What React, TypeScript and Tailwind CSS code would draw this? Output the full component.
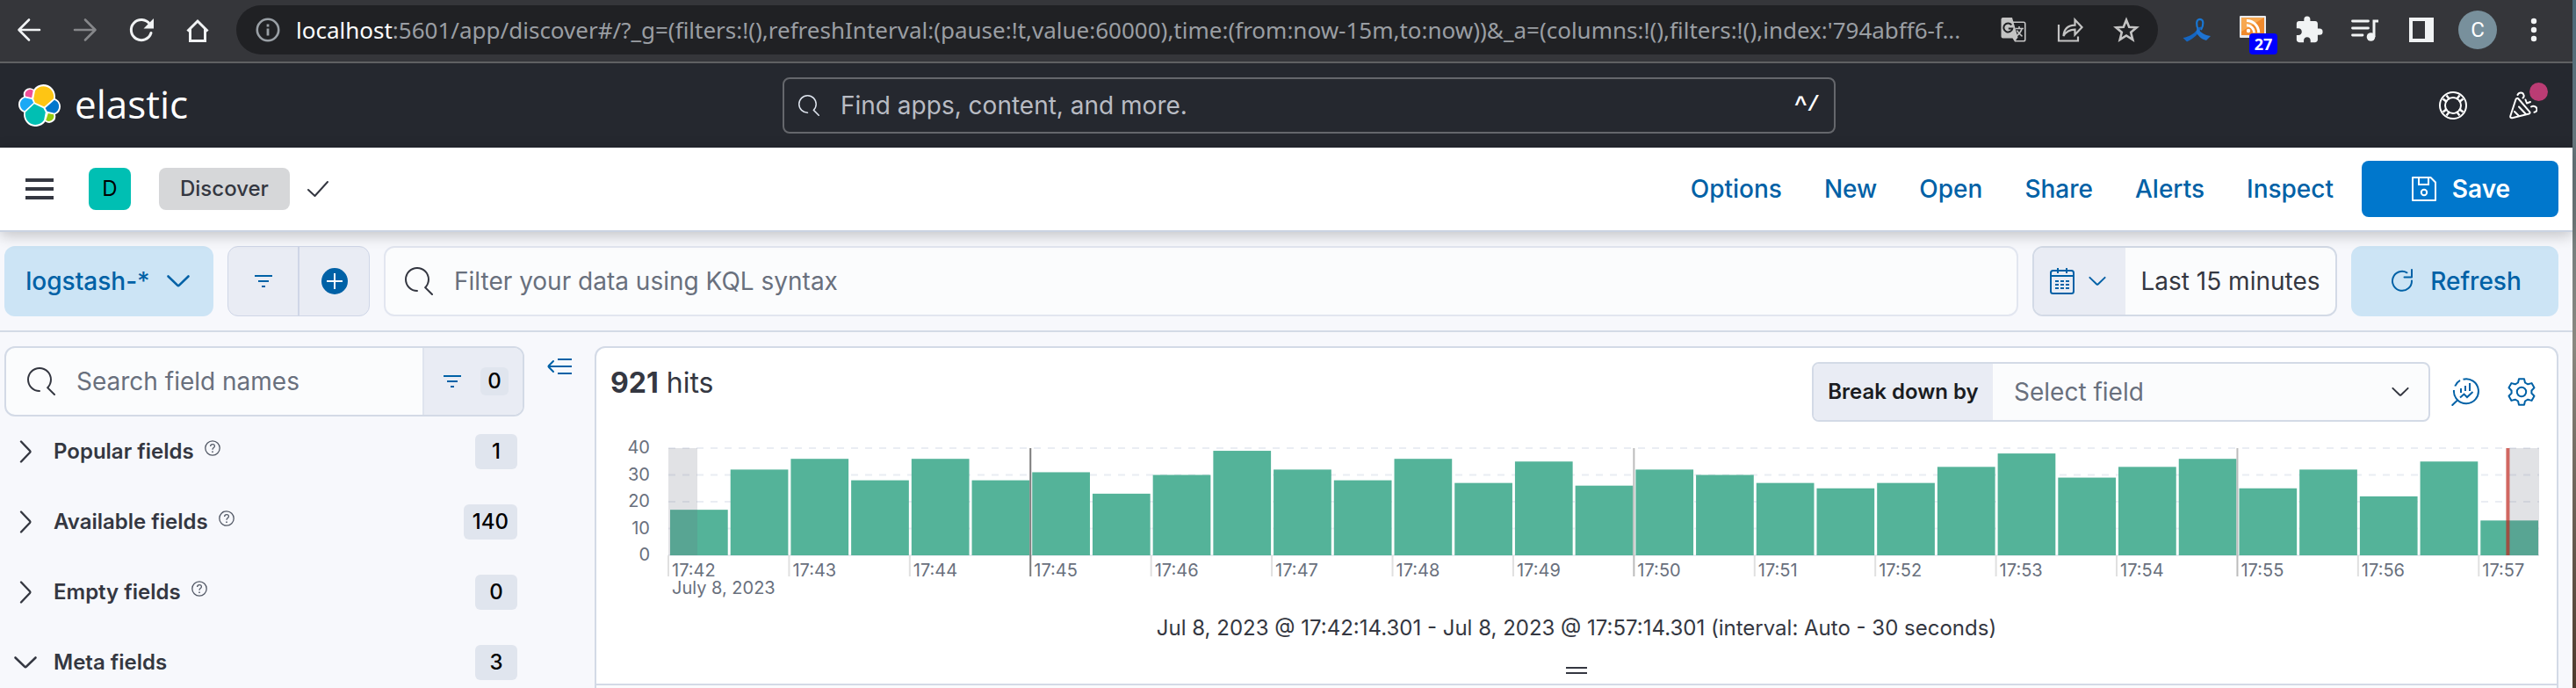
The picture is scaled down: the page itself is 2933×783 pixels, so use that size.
import React from "react";

type IconProps = { className?: string };

const bars = [
  17, 32, 36, 28, 36, 28, 31, 23, 30, 39, 32, 28, 36, 27, 35, 26, 32, 30, 27, 25, 27, 33, 38, 29, 33, 36, 25, 32, 22,
  35, 13,
];
const PLOT_HEIGHT = 122;
const Y_MAX = 40;

const minuteTicks = Array.from({ length: 16 }, (_, i) => ({ label: `17:${42 + i}`, slot: i * 2 }));

const fieldGroups = [
  { name: "Popular fields", count: 1, help: true, open: false },
  { name: "Available fields", count: 140, help: true, open: false },
  { name: "Empty fields", count: 0, help: true, open: false },
  { name: "Meta fields", count: 3, help: false, open: true },
];

const menuLinks = ["Options", "New", "Open", "Share", "Alerts", "Inspect"];

function SearchIcon({ className }: IconProps) {
  return (
    <svg viewBox="0 0 16 16" className={className} fill="currentColor" aria-hidden="true">
      <path d="M11.271 11.978l3.872 3.873a.502.502 0 00.708 0 .502.502 0 000-.708l-3.565-3.564c2.38-2.747 2.267-6.923-.342-9.532-2.73-2.73-7.17-2.73-9.898 0-2.728 2.729-2.728 7.17 0 9.9a6.955 6.955 0 004.949 2.05.5.5 0 000-1 5.96 5.96 0 01-4.242-1.757 6.01 6.01 0 010-8.486 6.004 6.004 0 018.484 0 6.01 6.01 0 010 8.486.5.5 0 000 .738z" />
    </svg>
  );
}

function ChevronDown({ className }: IconProps) {
  return (
    <svg viewBox="0 0 32 32" className={className} fill="none" stroke="currentColor" aria-hidden="true">
      <path d="M4.5 10.5 15 20.600q1 .9 2 0L27.5 10.5" strokeWidth="2.6" strokeLinecap="round" strokeLinejoin="round" />
    </svg>
  );
}

function ChevronRight({ className }: IconProps) {
  return (
    <svg viewBox="0 0 32 32" className={className} fill="none" stroke="currentColor" aria-hidden="true">
      <path d="M11 4.5 21 15q.9 1 0 2L11 27.5" strokeWidth="2.4" strokeLinecap="round" strokeLinejoin="round" />
    </svg>
  );
}

function FilterIcon({ className }: IconProps) {
  return (
    <svg viewBox="0 0 32 32" className={className} fill="none" stroke="currentColor" strokeWidth="2" aria-hidden="true">
      <path d="M6 10h20M10 16h12M14 22h4" />
    </svg>
  );
}

function ElasticMark({ className }: IconProps) {
  return (
    <svg viewBox="0 0 32 32" className={className} aria-hidden="true">
      <path
        fill="#fff"
        d="M32 16.77c0-2.68-1.66-5.02-4.157-5.946A9.25 9.25 0 0 0 28 9.11C28 4.089 23.93 0 18.93 0c-2.925 0-5.643 1.4-7.344 3.78A4.787 4.787 0 0 0 8.64 2.776 4.83 4.83 0 0 0 3.8 7.614c0 .58.1 1.14.3 1.66A6.381 6.381 0 0 0 0 15.26c0 2.7 1.68 5.06 4.18 5.97-.11.56-.16 1.14-.16 1.73 0 5.01 4.07 9.07 9.07 9.07 2.93 0 5.65-1.41 7.34-3.8.84.66 1.87 1.02 2.94 1.02a4.83 4.83 0 0 0 4.84-4.84c0-.58-.1-1.14-.3-1.66A6.383 6.383 0 0 0 32 16.77"
      />
      <path fill="#FEC514" d="M12.58 13.787l7.002 3.211 7.066-6.213a7.849 7.849 0 0 0 .152-1.557c0-4.287-3.477-7.774-7.752-7.774a7.74 7.74 0 0 0-6.395 3.381l-1.176 6.118 1.103 2.834z" />
      <path fill="#00BFB3" d="M5.333 21.228a7.964 7.964 0 0 0-.153 1.586c0 4.299 3.487 7.796 7.773 7.796a7.774 7.774 0 0 0 6.415-3.397l1.166-6.1-1.557-2.987-7.03-3.212-6.614 6.314z" />
      <path fill="#F04E98" d="M5.288 9.067l4.8 1.137L11.14 4.728A3.785 3.785 0 0 0 5.06 7.713c0 .476.078.936.229 1.354z" />
      <path fill="#1BA9F5" d="M4.872 10.214c-2.14.71-3.592 2.762-3.592 5.02a5.274 5.274 0 0 0 3.408 4.931l6.735-6.114-1.237-2.651-5.314-1.186z" />
      <path fill="#93C90E" d="M20.873 27.192c.669.514 1.48.795 2.31.795a3.785 3.785 0 0 0 3.559-5.084l-4.2-.986-1.669 5.275z" />
      <path fill="#07C" d="M21.848 20.563l5.28 1.238c2.148-.711 3.6-2.763 3.6-5.022a5.282 5.282 0 0 0-3.419-4.923l-6.908 6.073 1.447 2.634z" />
    </svg>
  );
}

function ChromeButton({ label, children }: { label: string; children: React.ReactNode }) {
  return (
    <button type="button" aria-label={label} className="relative flex h-14 w-16 shrink-0 items-center justify-center">
      {children}
    </button>
  );
}

function BrowserBar() {
  return (
    <div className="flex h-[72px] shrink-0 items-center border-b-2 border-[#5f6063] bg-[#35363a] pb-0.5 pl-px pr-3 text-[#f1f3f4]">
      <ChromeButton label="Back">
        <svg viewBox="0 0 32 32" className="size-8" fill="none" stroke="#f1f3f4" strokeWidth="2.6">
          <path d="M28 16H5M16 4.500 4.500 16 16 27.500" strokeLinejoin="round" strokeLinecap="round" />
        </svg>
      </ChromeButton>
      <ChromeButton label="Forward">
        <svg viewBox="0 0 32 32" className="size-8" fill="none" stroke="#86878a" strokeWidth="2.6">
          <path d="M4 16h23M16 4.500 27.500 16 16 27.500" strokeLinejoin="round" strokeLinecap="round" />
        </svg>
      </ChromeButton>
      <ChromeButton label="Reload">
        <svg viewBox="0 0 32 32" className="size-8" fill="none" stroke="#f1f3f4" strokeWidth="3">
          <path d="M27 19.5A11.6 11.6 0 1 1 25.5 9.5" strokeLinecap="round" />
          <path d="M30 3v11.5H18.5z" fill="#f1f3f4" stroke="none" />
        </svg>
      </ChromeButton>
      <ChromeButton label="Home">
        <svg viewBox="0 0 32 32" className="size-8" fill="none" stroke="#f1f3f4" strokeWidth="3">
          <path d="M4.5 17.5 16 6l11.500 11.5" />
          <path d="M7.5 15v13.500h17V15" />
        </svg>
      </ChromeButton>
      <div className="ml-3 flex h-14 min-w-0 flex-1 items-center rounded-full bg-[#202124] pl-[22px] pr-1">
        <svg viewBox="0 0 28 28" className="size-7 shrink-0" fill="none" stroke="#9aa0a6" strokeWidth="2.6">
          <circle cx="14" cy="14" r="12.2" />
          <path d="M14 12.5v8M14 7.500v3" strokeWidth="2.8" />
        </svg>
        <div className="ml-[18px] min-w-0 flex-1 truncate font-['Noto_Sans','Open_Sans',sans-serif] text-[26px] text-[#9a9ea3]">
          <span className="text-white">localhost</span>
          :5601/app/discover#/?_g=(filters:!(),refreshInterval:(pause:!t,value:60000),time:(from:now-15m,to:now))&amp;_a=(columns:!(),filters:!(),index:'794abff6-f...
        </div>
        <ChromeButton label="Translate this page">
          <svg viewBox="0 0 30 30" className="size-[30px]" fill="none">
            <path d="M12 6.2h14a1.8 1.8 0 0 1 1.8 1.8v18a1.8 1.8 0 0 1-1.8 1.8H16" stroke="#c4c4c4" strokeWidth="1.6" />
            <path d="M2.5 1h10.500l6.500 22.500-3.500 5-2.500-4h-11a2 2 0 0 1-2-2V3a2 2 0 0 1 2-2z" fill="#c4c4c4" />
            <path d="M12.3 9.4a5 5 0 1 0 1 4.100H8.800" stroke="#202124" strokeWidth="2" />
            <path d="M16.5 13.5h9.500M21 11v2.500M24 13.5c-.8 4-3.500 6.500-6 8.300M18.5 15.5c1 2.500 3.500 5 6 6.800" stroke="#c4c4c4" strokeWidth="1.6" />
          </svg>
        </ChromeButton>
        <ChromeButton label="Share this page">
          <svg viewBox="0 0 32 32" className="size-8" fill="none" stroke="#c4c4c4" strokeWidth="2.2">
            <path d="M3 10v18.500h22v-5" />
            <path d="M8.5 23c.5-8 5-12 13-12.300V4.500l8 8.500-8 8.500v-5.800c-6 0-10 2-13 7.300z" />
          </svg>
        </ChromeButton>
        <ChromeButton label="Bookmark this page">
          <svg viewBox="0 0 32 32" className="size-8" fill="none" stroke="#c4c4c4" strokeWidth="2.6">
            <path d="M16 4.8l3.200 7.900 8.500.6-6.500 5.500 2.100 8.300-7.300-4.600-7.300 4.600 2.100-8.300-6.500-5.500 8.500-.6z" />
          </svg>
        </ChromeButton>
      </div>
      <div className="ml-3 flex items-center">
        <ChromeButton label="Ribbon extension">
          <svg viewBox="0 0 32 32" className="size-8" fill="none">
            <path d="M18 16C15.500 11 15 4 19.800 3.800 24.600 4 24 11 21 16" stroke="#1976d2" strokeWidth="2.2" />
            <path d="M21.500 12.500C20 19 13 26 5 29.500L.5 25C8 24 15 19.500 18.500 13z" fill="#1565c0" />
            <path d="M17 13c2.500 5.500 7 8.800 15 10l-5 5c-6-1.500-9.500-5.500-11.500-9.500z" fill="#1e73d2" />
          </svg>
        </ChromeButton>
        <ChromeButton label="Feed reader extension">
          <svg viewBox="0 0 32 32" className="mb-1 size-8" fill="none">
            <rect x="1" y="2" width="30" height="25" rx="1" fill="#e9eaec" />
            <rect x="3" y="4" width="26" height="20" fill="#f08a2c" />
            <path d="M3 4h26L3 20z" fill="#f7a851" />
            <circle cx="11" cy="19" r="2.2" fill="#fff" />
            <path d="M9 12.8a8.5 8.5 0 0 1 8.500 8.500M9 7.5a13.500 13.500 0 0 1 13.700 13.700" stroke="#fff" strokeWidth="3" />
          </svg>
          <span className="absolute bottom-0 right-1 flex h-6 w-8 items-center justify-center rounded-[4px] bg-[#0000ff] font-['Open_Sans',sans-serif] text-[18px] font-bold leading-6 text-white">
            27
          </span>
        </ChromeButton>
        <ChromeButton label="Extensions">
          <svg viewBox="0 0 24 24" className="size-[34px]" fill="#f1f3f4">
            <path d="M20.5 11H19V7c0-1.1-.9-2-2-2h-4V3.5a2.5 2.5 0 0 0-5 0V5H4c-1.1 0-1.99.9-1.99 2v3.8H3.5c1.49 0 2.7 1.21 2.7 2.7s-1.21 2.7-2.7 2.7H2V20c0 1.1.9 2 2 2h3.8v-1.5c0-1.49 1.21-2.7 2.7-2.7s2.7 1.21 2.7 2.7V22H17c1.1 0 2-.9 2-2v-4h1.5a2.5 2.5 0 0 0 0-5z" />
          </svg>
        </ChromeButton>
        <ChromeButton label="Media controls">
          <svg viewBox="0 0 32 32" className="size-8" fill="none" stroke="#f1f3f4" strokeWidth="2.8" strokeLinecap="round">
            <path d="M1.5 6h18M1.5 14h18M1.5 22H13" />
            <path d="M26 24V6h5" strokeLinecap="butt" strokeWidth="3" />
            <circle cx="22.5" cy="24" r="4.8" fill="#f1f3f4" stroke="none" />
          </svg>
        </ChromeButton>
        <ChromeButton label="Side panel">
          <svg viewBox="0 0 28 28" className="size-7">
            <path fill="#f1f3f4" fillRule="evenodd" d="M0 0h28v28H0zM4 4v20h14V4z" />
          </svg>
        </ChromeButton>
        <ChromeButton label="Profile">
          <span className="flex size-11 items-center justify-center rounded-full bg-[#78909c] font-[Roboto,sans-serif] text-[24px] leading-none text-white">
            C
          </span>
        </ChromeButton>
        <ChromeButton label="Browser menu">
          <svg viewBox="0 0 8 28" className="h-7 w-2" fill="#f1f3f4">
            <circle cx="4" cy="4" r="3.2" />
            <circle cx="4" cy="14" r="3.2" />
            <circle cx="4" cy="24" r="3.2" />
          </svg>
        </ChromeButton>
      </div>
    </div>
  );
}

function GlobalHeader() {
  return (
    <header className="grid h-24 shrink-0 grid-cols-[891fr_1199fr_839fr] items-center bg-[#25282f] text-white">
      <a href="#home" className="flex items-center pl-[21px]">
        <ElasticMark className="size-12" />
        <span className="ml-4 pb-1 font-['Open_Sans','Noto_Sans',sans-serif] text-[44px] leading-[48px]">elastic</span>
      </a>
      <div className="flex h-16 items-center rounded-lg border-2 border-[#65676c] px-4">
        <SearchIcon className="size-6 shrink-0 text-[#dfe5ef]" />
        <input
          type="search"
          aria-label="Find apps, content, and more."
          placeholder="Find apps, content, and more."
          className="ml-6 min-w-0 flex-1 bg-transparent text-[28px] leading-8 text-white outline-none placeholder:text-[#b9bcc4]"
        />
        <span className="font-['Liberation_Mono',monospace] text-[24px] font-bold leading-8">^/</span>
      </div>
      <div className="flex items-center justify-end gap-12 pr-10">
        <button type="button" aria-label="Help menu">
          <svg viewBox="0 0 32 32" className="size-8" fill="none" stroke="#fff" strokeWidth="2">
            <circle cx="16" cy="16" r="15" />
            <circle cx="16" cy="16" r="9" />
            <path d="M4.5 8.500 9 12M8.5 4.500 12 9M27.5 8.500 23 12M23.5 4.500 20 9M4.5 23.500 9 20M8.5 27.500 12 23M27.5 23.500 23 20M23.5 27.500 20 23" strokeWidth="2.4" />
          </svg>
        </button>
        <button type="button" aria-label="Newsfeed menu" className="relative">
          <svg viewBox="0 0 32 32" className="size-8" fill="none" stroke="#fff" strokeWidth="2" strokeLinecap="round" strokeLinejoin="round">
            <path d="M7.5 9 1.3 28c-.4 1.500.6 2.500 2 2.200L22.500 25.500c1.200-.4 1.400-1.500.6-2.400L10.500 8.500c-1-1-2.500-.8-3 .5z" />
            <path d="M6 23l5 5M11 17.500l8 8.500" />
            <path d="M9.5 4c1.500-3.500 6-3.500 7 0 .6 1.800-.2 2.800-1 3.500M25 17.500c3-2 7 .4 6.500 3.500-.2 1.700-1.300 2.600-3 2.800M18.5 9.500l1.500 4 4-1.500" />
          </svg>
          <span className="absolute -right-3 -top-2.5 size-[21px] rounded-full bg-[#bb3c74]" />
        </button>
      </div>
    </header>
  );
}

function AppMenu() {
  return (
    <nav className="relative z-10 flex h-24 shrink-0 items-center border-b-2 border-[#cad3e2] bg-white pr-4 shadow-[0_4px_16px_rgba(0,0,0,0.22)]">
      <button type="button" aria-label="Toggle primary navigation" className="ml-[29px]">
        <svg viewBox="0 0 32 24" className="h-6 w-8" fill="#343741">
          <path d="M0 0h32v4H0zM0 10h32v4H0zM0 20h32v4H0z" />
        </svg>
      </button>
      <button type="button" aria-label="Default space" className="ml-10 flex size-12 items-center justify-center rounded-lg bg-[#00bfb3] text-[24px] text-black">
        D
      </button>
      <a href="#discover" className="ml-8 flex h-12 items-center rounded-lg bg-[#d6d7d9] px-6 text-[24px] font-medium text-[#343741]">
        Discover
      </a>
      <svg viewBox="0 0 24 24" className="ml-5 size-6" fill="none" stroke="#343741" strokeWidth="2" strokeLinecap="round" strokeLinejoin="round">
        <path d="M1 13l7.500 7L23 4" />
      </svg>
      <div className="ml-auto flex items-center">
        {menuLinks.map((link) => (
          <a key={link} href={`#${link.toLowerCase()}`} className="px-6 text-[28px] font-medium leading-8 text-[#0061a6]">
            {link}
          </a>
        ))}
        <button type="button" className="ml-2 flex h-16 w-56 items-center justify-center gap-4 rounded-lg bg-[#0077cc] text-[28px] font-semibold leading-8 text-white">
          <svg viewBox="0 0 32 32" className="size-8" fill="none" stroke="#fff" strokeWidth="2">
            <path d="M3 3h20.500l5.500 5.500V29H3z" strokeLinejoin="round" />
            <path d="M10 3v8h11V3" />
            <circle cx="16" cy="20" r="3.2" />
          </svg>
          Save
        </button>
      </div>
    </nav>
  );
}

function QueryBar() {
  return (
    <div className="flex shrink-0 gap-4 border-b-2 border-[#d3dae6] pb-4 pl-[5px] pr-4 pt-4">
      <button type="button" className="flex h-20 w-[238px] shrink-0 items-center justify-center gap-4 rounded-xl bg-[#cce4f5] text-[28px] font-medium leading-8 text-[#0061a6]">
        logstash-*
        <ChevronDown className="size-8" />
      </button>
      <div className="flex h-20 w-[162px] shrink-0 divide-x-2 divide-[#cfd6e7] overflow-hidden rounded-xl border border-[#cfd6e7] bg-[#e9ecf4] text-[#0061a6]">
        <button type="button" aria-label="Saved query menu" className="flex flex-1 items-center justify-center">
          <FilterIcon className="size-8" />
        </button>
        <button type="button" aria-label="Add filter" className="flex flex-1 items-center justify-center">
          <svg viewBox="0 0 32 32" className="size-8" aria-hidden="true">
            <circle cx="16" cy="16" r="15" fill="#0061a6" />
            <path d="M16 7v18M7 16h18" stroke="#fff" strokeWidth="2" />
          </svg>
        </button>
      </div>
      <div className="flex h-20 min-w-0 flex-1 items-center rounded-xl border-2 border-[#e2e6f0] bg-[#fbfcfd] pl-[22px]">
        <SearchIcon className="size-8 shrink-0 text-[#343741]" />
        <input
          type="search"
          aria-label="Filter your data using KQL syntax"
          placeholder="Filter your data using KQL syntax"
          className="ml-6 min-w-0 flex-1 bg-transparent text-[28px] leading-8 text-[#343741] outline-none placeholder:text-[#69707d]"
        />
      </div>
      <div className="flex h-20 w-[347px] shrink-0 overflow-hidden rounded-xl border-2 border-[#d3dae6] bg-[#fbfcfd]">
        <button type="button" aria-label="Date quick select" className="flex w-[104px] items-center gap-3 bg-[#e9ecf4] pl-4 text-[#0061a6]">
          <svg viewBox="0 0 32 32" className="size-8" fill="none" stroke="currentColor" strokeWidth="2" aria-hidden="true">
            <rect x="3" y="4" width="26" height="26" rx="2.5" />
            <path d="M3 10h26M11 1v6M21 1v6" />
            <path d="M8 16h16M8 20h16M8 24h16" strokeDasharray="4 2" />
          </svg>
          <ChevronDown className="size-6" />
        </button>
        <button type="button" className="flex-1 text-center text-[28px] leading-8 text-[#343741]">
          Last 15 minutes
        </button>
      </div>
      <button type="button" className="flex h-20 w-[236px] shrink-0 items-center justify-center gap-4 rounded-xl bg-[#cce4f5] text-[28px] font-medium leading-8 text-[#0061a6]">
        <svg viewBox="0 0 32 32" className="size-8" fill="none" stroke="currentColor" strokeWidth="2" strokeLinecap="round" strokeLinejoin="round" aria-hidden="true">
          <path d="M21.5 6.3A11 11 0 1 0 27 15.5" />
          <path d="M27 3v8.500h-8.500" />
        </svg>
        Refresh
      </button>
    </div>
  );
}

function Sidebar() {
  return (
    <aside className="flex w-[677px] shrink-0 pl-[5px] pt-4">
      <div className="w-[592px]">
        <div className="flex h-20 overflow-hidden rounded-xl border-2 border-[#d3dae6] bg-[#fbfcfd]">
          <SearchIcon className="ml-6 size-8 shrink-0 self-center text-[#343741]" />
          <input
            type="search"
            aria-label="Search field names"
            placeholder="Search field names"
            className="ml-6 min-w-0 flex-1 bg-transparent text-[28px] leading-8 text-[#343741] outline-none placeholder:text-[#69707d]"
          />
          <button type="button" aria-label="Filter by type" className="flex w-[114px] items-center gap-4 border-l-2 border-[#dfe4ee] bg-[#e9ecf4] pl-4 text-[#0061a6]">
            <FilterIcon className="size-8" />
            <span className="flex size-8 items-center justify-center rounded-md bg-[#e0e5ee] text-[24px] font-medium text-black">0</span>
          </button>
        </div>
        <ul>
          {fieldGroups.map((group) => (
            <li key={group.name}>
              <button type="button" aria-expanded={group.open} className="flex h-20 w-full items-center px-2 text-left">
                {group.open ? (
                  <ChevronDown className="size-8 text-[#343741]" />
                ) : (
                  <ChevronRight className="size-8 text-[#343741]" />
                )}
                <span className="ml-4 text-[24px] font-semibold leading-8 text-[#343741]">{group.name}</span>
                {group.help && (
                  <svg viewBox="0 0 18 18" className="mb-2 ml-3 size-[18px]" fill="none" stroke="#535966" strokeWidth="1.3" aria-hidden="true">
                    <circle cx="9" cy="9" r="8.2" />
                    <path d="M6.6 7c.1-3.2 4.8-3.1 4.8-.3 0 1.900-2.400 1.900-2.400 4.100" />
                    <path d="M9 12.5v1.600" strokeWidth="1.6" />
                  </svg>
                )}
                <span className="ml-auto flex h-10 min-w-12 items-center justify-center rounded-md bg-[#e0e5ee] px-2.5 text-[24px] font-medium leading-8 text-black">
                  {group.count}
                </span>
              </button>
            </li>
          ))}
        </ul>
      </div>
      <button type="button" aria-label="Hide sidebar" className="ml-6 mt-2 size-8 text-[#0061a6]">
        <svg viewBox="0 0 32 32" className="size-8" fill="none" stroke="currentColor" strokeWidth="2" aria-hidden="true">
          <path d="M14 7h16M3 15h27M14 23h16" />
          <path d="M9 9l-5.200 5.200q-.8.8 0 1.600L9 21" strokeLinecap="round" />
        </svg>
      </button>
    </aside>
  );
}

function Histogram() {
  const slotWidth = 100 / bars.length;
  const yFor = (value: number) => PLOT_HEIGHT - (value / Y_MAX) * PLOT_HEIGHT;
  const tickColor = (label: string) =>
    label === "17:45" ? "#7b7b7b" : label === "17:50" || label === "17:55" ? "#bcbcbc" : "#e0e0e0";

  return (
    <div className="flex pl-[28px] pr-5">
      <svg className="h-[170px] w-[54px] shrink-0 overflow-visible" role="presentation">
        {[40, 30, 20, 10, 0].map((value) => (
          <text key={value} x="33" y={yFor(value) + 6} textAnchor="end" className="fill-[#69707d] text-[20px]">
            {value}
          </text>
        ))}
      </svg>
      <svg className="h-[170px] min-w-0 flex-1 overflow-visible" role="img" aria-label="Hits over time">
        {[40, 30, 20, 10, 0].map((value) => (
          <line key={value} x1="0" x2="100%" y1={yFor(value)} y2={yFor(value)} stroke="#eaedf3" strokeWidth="2" strokeDasharray={value ? "8 8" : undefined} />
        ))}
        {bars.map((value, i) => (
          <rect
            key={i}
            x={`${i * slotWidth}%`}
            y={yFor(value)}
            height={PLOT_HEIGHT - yFor(value)}
            fill="#54b399"
            style={{ width: `calc(${slotWidth}% - 3px)`, transform: "translateX(2px)" }}
          />
        ))}
        <rect x="0" y="0" width="1.55%" height={PLOT_HEIGHT} fill="#69707d" fillOpacity="0.2" />
        <rect x="98.4%" y="0" width="1.6%" height={PLOT_HEIGHT} fill="#69707d" fillOpacity="0.2" />
        <line x1="98.33%" x2="98.33%" y1="0" y2={PLOT_HEIGHT} stroke="#bd271e" strokeOpacity="0.7" strokeWidth="4" />
        {minuteTicks.map(({ label, slot }) => {
          const x = `${slot * slotWidth}%`;
          const major = label === "17:45" || label === "17:50" || label === "17:55";
          return (
            <g key={label}>
              <line x1={x} x2={x} y1={major ? 0 : PLOT_HEIGHT} y2="146" stroke={tickColor(label)} strokeWidth="2" />
              <text x={x} dx="4" y="146" className="fill-[#69707d] text-[20px]">
                {label}
              </text>
            </g>
          );
        })}
        <text x="0" dx="4" y="166" className="fill-[#69707d] text-[20px]">
          July 8, 2023
        </text>
      </svg>
    </div>
  );
}

function ResultsPanel() {
  return (
    <main className="mr-4 mt-4 flex min-w-0 flex-1 flex-col rounded-t-xl border-2 border-b-0 border-[#d3dae6] bg-white">
      <div className="flex items-start pl-4 pr-6 pt-4">
        <h1 className="text-[32px] leading-[48px] text-[#343741]">
          <strong className="font-bold">921</strong> hits
        </h1>
        <div className="ml-auto flex h-[68px] w-[704px] overflow-hidden rounded-lg border-2 border-[#d3dae6] bg-[#fbfcfd]">
          <label htmlFor="breakdown" className="flex w-[204px] items-center justify-center bg-[#e9ecf4] text-[24px] font-semibold text-[#1a1c21]">
            Break down by
          </label>
          <div className="relative flex-1">
            <select id="breakdown" className="size-full appearance-none bg-transparent pl-6 text-[28px] text-[#69707d] outline-none">
              <option>Select field</option>
            </select>
            <ChevronDown className="pointer-events-none absolute right-5 top-5 size-6 text-[#343741]" />
          </div>
        </div>
        <button type="button" aria-label="Edit visualization" className="ml-6 mt-[18px] text-[#0061a6]">
          <svg viewBox="0 0 32 32" className="size-8" fill="none" stroke="currentColor" strokeWidth="2" aria-hidden="true">
            <path d="M13.5 1.700A14 14 0 1 1 3 14M4.3 9.500C5.500 6.500 7.500 4.200 10 2.800" />
            <path d="M7 25.5 1.300 31" strokeLinecap="round" />
            <path d="M11 12v5M16 9v6M21 6v9" />
            <path d="M10 22.500l4.500-4 3.500 3.500 6.500-6" />
          </svg>
        </button>
        <button type="button" aria-label="Chart options" className="ml-8 mt-[18px] text-[#0061a6]">
          <svg viewBox="0 0 32 32" className="size-8" fill="none" stroke="currentColor" strokeWidth="2" strokeLinejoin="round" aria-hidden="true">
            <path d="M13 1.2h6l1 4.300 3.200 1.800 4.300-1.200 3 5.200-3.100 3.200v3l3.100 3.200-3 5.200-4.300-1.200L20 26.5l-1 4.300h-6l-1-4.300-3.200-1.800-4.300 1.200-3-5.200 3.100-3.200v-3L1.500 11.300l3-5.200 4.300 1.200L12 5.500z" />
            <circle cx="16" cy="16" r="5.2" />
          </svg>
        </button>
      </div>
      <div className="mt-[30px]">
        <Histogram />
      </div>
      <p className="mt-[19px] text-center text-[24px] leading-8 text-[#343741]">
        Jul 8, 2023 @ 17:42:14.301 - Jul 8, 2023 @ 17:57:14.301 (interval: Auto - 30 seconds)
      </p>
      <button type="button" aria-label="Resize chart" className="mx-auto mt-7 flex h-2 w-6 flex-col justify-between">
        <span className="h-0.5 w-full bg-[#343741]" />
        <span className="h-0.5 w-full bg-[#343741]" />
      </button>
      <div className="mt-[11px] flex-1 border-t-2 border-[#d3dae6] bg-[#fafbfd]" />
    </main>
  );
}

export default function App() {
  return (
    <div className="flex h-screen overflow-hidden bg-[#f7f8fc] font-[Inter,sans-serif]">
      <div className="flex min-w-0 flex-1 flex-col">
        <BrowserBar />
        <GlobalHeader />
        <AppMenu />
        <QueryBar />
        <div className="flex min-h-0 flex-1">
          <Sidebar />
          <ResultsPanel />
        </div>
      </div>
      <div className="w-1 shrink-0 bg-linear-to-b from-[#4a6878] via-[#8a8880] to-[#4d3a2c]" />
    </div>
  );
}
